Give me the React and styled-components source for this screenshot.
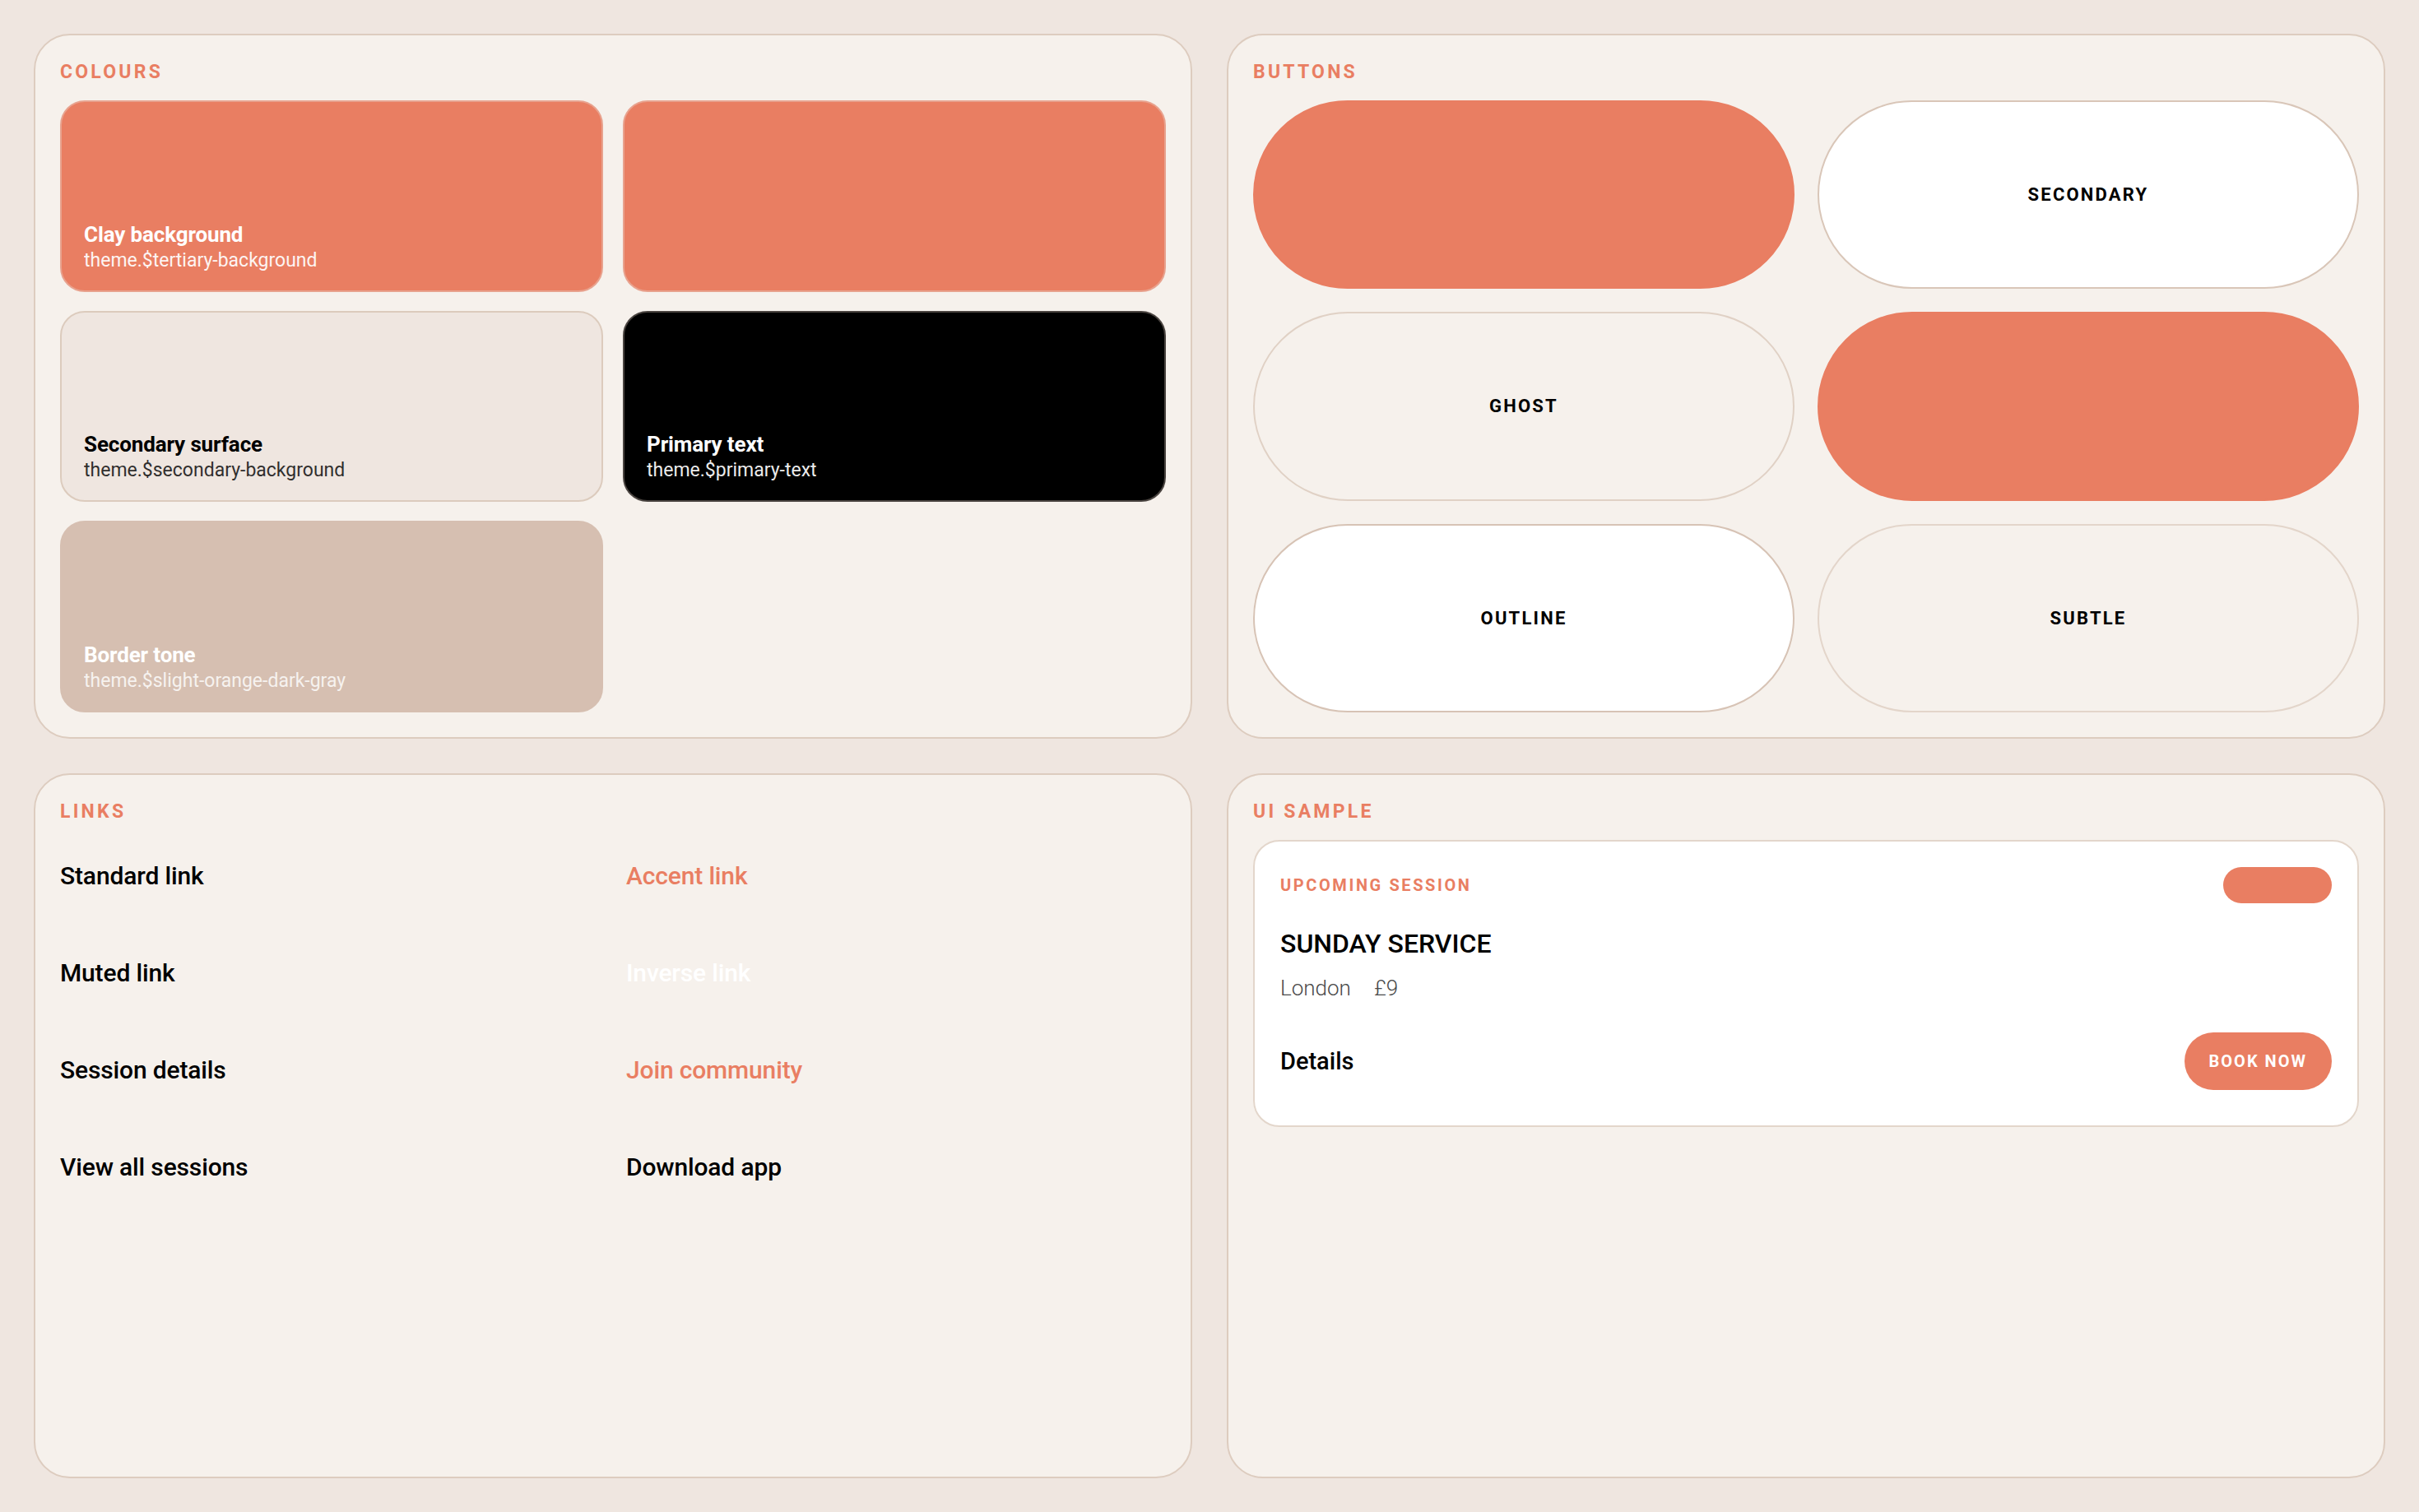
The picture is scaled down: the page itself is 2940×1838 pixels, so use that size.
import React from "react";
import styled, { createGlobalStyle, css } from "styled-components";

const c = {
  page: "#EFE6E0",
  panel: "#F6F1EC",
  panelBorder: "#DDCCBF",
  clay: "#E97E62",
  clayEdge: "#E8A28E",
  surface: "#EFE6E0",
  surfaceEdge: "#DCCBBD",
  tone: "#D6BFB1",
  black: "#000000",
  cardBorder: "#E3D6CB",
};

const GlobalStyle = createGlobalStyle`
  html, body { margin: 0; padding: 0; }
  body {
    background: ${c.page};
    font-family: Roboto, "Noto Sans", "Liberation Sans", sans-serif;
    -webkit-font-smoothing: antialiased;
  }
  * { box-sizing: border-box; }
`;

const Page = styled.main`
  height: 100vh;
  padding: 41px;
  display: grid;
  grid-template-columns: 1fr 1fr;
  grid-template-rows: 1fr 1fr;
  gap: 42px;
`;

const Panel = styled.section`
  background: ${c.panel};
  border: 2px solid ${c.panelBorder};
  border-radius: 44px;
  padding: 30px;
  display: flex;
  flex-direction: column;
  min-height: 0;
`;

const Label = styled.h2`
  margin: 0 0 20px;
  font-size: 23px;
  line-height: 29px;
  font-weight: 700;
  letter-spacing: 0.14em;
  text-transform: uppercase;
  color: ${c.clay};
`;

const SwatchGrid = styled.div`
  flex: 1;
  display: grid;
  grid-template-columns: 1fr 1fr;
  grid-template-rows: repeat(3, 1fr);
  gap: 23px 24px;
`;

const swatchVariants = {
  clay: css`background: ${c.clay}; border-color: ${c.clayEdge}; color: #fff;`,
  surface: css`background: ${c.surface}; border-color: ${c.surfaceEdge}; color: #000;`,
  black: css`background: ${c.black}; border-color: #4a4440; color: #fff;`,
  tone: css`background: ${c.tone}; border-color: ${c.tone}; color: #fff;`,
};

const Swatch = styled.div`
  border: 2px solid;
  border-radius: 30px;
  padding: 0 27px 21px;
  display: flex;
  flex-direction: column;
  justify-content: flex-end;
  ${(p) => swatchVariants[p.$variant]}
`;

const SwatchTitle = styled.div`
  font-size: 26px;
  line-height: 32px;
  font-weight: 700;
  letter-spacing: -0.005em;
`;

const SwatchToken = styled.div`
  font-size: 23px;
  line-height: 31px;
  font-weight: 400;
  opacity: ${(p) => p.$fade};
`;

const ButtonGrid = styled.div`
  flex: 1;
  display: grid;
  grid-template-columns: 1fr 1fr;
  grid-template-rows: repeat(3, 1fr);
  gap: 28px;
`;

const pillVariants = {
  primary: css`background: ${c.clay}; border-color: ${c.clay};`,
  secondary: css`background: #fff; border-color: #D9C6B8;`,
  ghost: css`background: transparent; border-color: #E0D1C5;`,
  tertiary: css`background: ${c.clay}; border-color: ${c.clay};`,
  outline: css`background: #fff; border-color: #D7C3B5;`,
  subtle: css`background: transparent; border-color: #E3D5CA;`,
};

const Pill = styled.button`
  border: 2px solid;
  border-radius: 999px;
  display: flex;
  align-items: center;
  justify-content: center;
  font-family: inherit;
  font-size: 22px;
  font-weight: 700;
  letter-spacing: 0.1em;
  text-transform: uppercase;
  color: #000;
  cursor: pointer;
  ${(p) => pillVariants[p.$variant]}
`;

const LinkGrid = styled.div`
  display: grid;
  grid-template-columns: 1fr 1fr;
  column-gap: 32px;
  row-gap: 30px;
  align-content: start;
`;

const linkTones = {
  standard: "#000",
  accent: c.clay,
  muted: "#000",
  inverse: "#fff",
};

const TextLink = styled.a`
  padding: 24px 0;
  font-size: 30px;
  line-height: 40px;
  font-weight: 500;
  letter-spacing: -0.005em;
  text-decoration: none;
  color: ${(p) => linkTones[p.$tone]};
`;

const Card = styled.article`
  background: #fff;
  border: 2px solid ${c.cardBorder};
  border-radius: 32px;
  padding: 31px 31px 43px;
  display: flex;
  flex-direction: column;
`;

const CardHeader = styled.div`
  display: flex;
  align-items: center;
  justify-content: space-between;
  height: 44px;
`;

const Eyebrow = styled.span`
  font-size: 20px;
  font-weight: 700;
  letter-spacing: 0.13em;
  text-transform: uppercase;
  color: ${c.clay};
`;

const Badge = styled.span`
  width: 132px;
  height: 44px;
  border-radius: 999px;
  background: ${c.clay};
`;

const CardTitle = styled.h3`
  margin: 31px 0 0;
  font-size: 32px;
  line-height: 36px;
  font-weight: 500;
  color: #000;
`;

const Meta = styled.div`
  margin-top: 19px;
  display: flex;
  gap: 28px;
  font-size: 26px;
  line-height: 34px;
  font-weight: 300;
  color: #4a4a4a;
`;

const CardFooter = styled.div`
  margin-top: 37px;
  display: flex;
  align-items: center;
  justify-content: space-between;
`;

const DetailsText = styled.span`
  font-size: 29px;
  font-weight: 500;
  color: #000;
`;

const BookButton = styled.button`
  height: 70px;
  padding: 0 30px;
  border: none;
  border-radius: 999px;
  background: ${c.clay};
  color: #fff;
  font-family: inherit;
  font-size: 20px;
  font-weight: 700;
  letter-spacing: 0.1em;
  text-transform: uppercase;
  cursor: pointer;
`;

const swatches = [
  { variant: "clay", title: "Clay background", token: "theme.$tertiary-background", fade: 0.92 },
  { variant: "clay" },
  { variant: "surface", title: "Secondary surface", token: "theme.$secondary-background", fade: 0.8 },
  { variant: "black", title: "Primary text", token: "theme.$primary-text", fade: 0.92 },
  { variant: "tone", title: "Border tone", token: "theme.$slight-orange-dark-gray", fade: 0.8 },
];

const buttons = [
  { variant: "primary", text: "" },
  { variant: "secondary", text: "Secondary" },
  { variant: "ghost", text: "Ghost" },
  { variant: "tertiary", text: "" },
  { variant: "outline", text: "Outline" },
  { variant: "subtle", text: "Subtle" },
];

const links = [
  { tone: "standard", text: "Standard link" },
  { tone: "accent", text: "Accent link" },
  { tone: "muted", text: "Muted link" },
  { tone: "inverse", text: "Inverse link" },
  { tone: "standard", text: "Session details" },
  { tone: "accent", text: "Join community" },
  { tone: "standard", text: "View all sessions" },
  { tone: "standard", text: "Download app" },
];

export default function App() {
  return (
    <>
      <GlobalStyle />
      <Page>
        <Panel>
          <Label>Colours</Label>
          <SwatchGrid>
            {swatches.map((s, i) => (
              <Swatch key={i} $variant={s.variant}>
                {s.title && <SwatchTitle>{s.title}</SwatchTitle>}
                {s.token && <SwatchToken $fade={s.fade}>{s.token}</SwatchToken>}
              </Swatch>
            ))}
          </SwatchGrid>
        </Panel>

        <Panel>
          <Label>Buttons</Label>
          <ButtonGrid>
            {buttons.map((b, i) => (
              <Pill key={i} $variant={b.variant}>{b.text}</Pill>
            ))}
          </ButtonGrid>
        </Panel>

        <Panel>
          <Label>Links</Label>
          <LinkGrid>
            {links.map((l, i) => (
              <TextLink key={i} href="#" $tone={l.tone}>{l.text}</TextLink>
            ))}
          </LinkGrid>
        </Panel>

        <Panel>
          <Label>UI Sample</Label>
          <Card>
            <CardHeader>
              <Eyebrow>Upcoming session</Eyebrow>
              <Badge />
            </CardHeader>
            <CardTitle>SUNDAY SERVICE</CardTitle>
            <Meta>
              <span>London</span>
              <span>£9</span>
            </Meta>
            <CardFooter>
              <DetailsText>Details</DetailsText>
              <BookButton>Book now</BookButton>
            </CardFooter>
          </Card>
        </Panel>
      </Page>
    </>
  );
}
